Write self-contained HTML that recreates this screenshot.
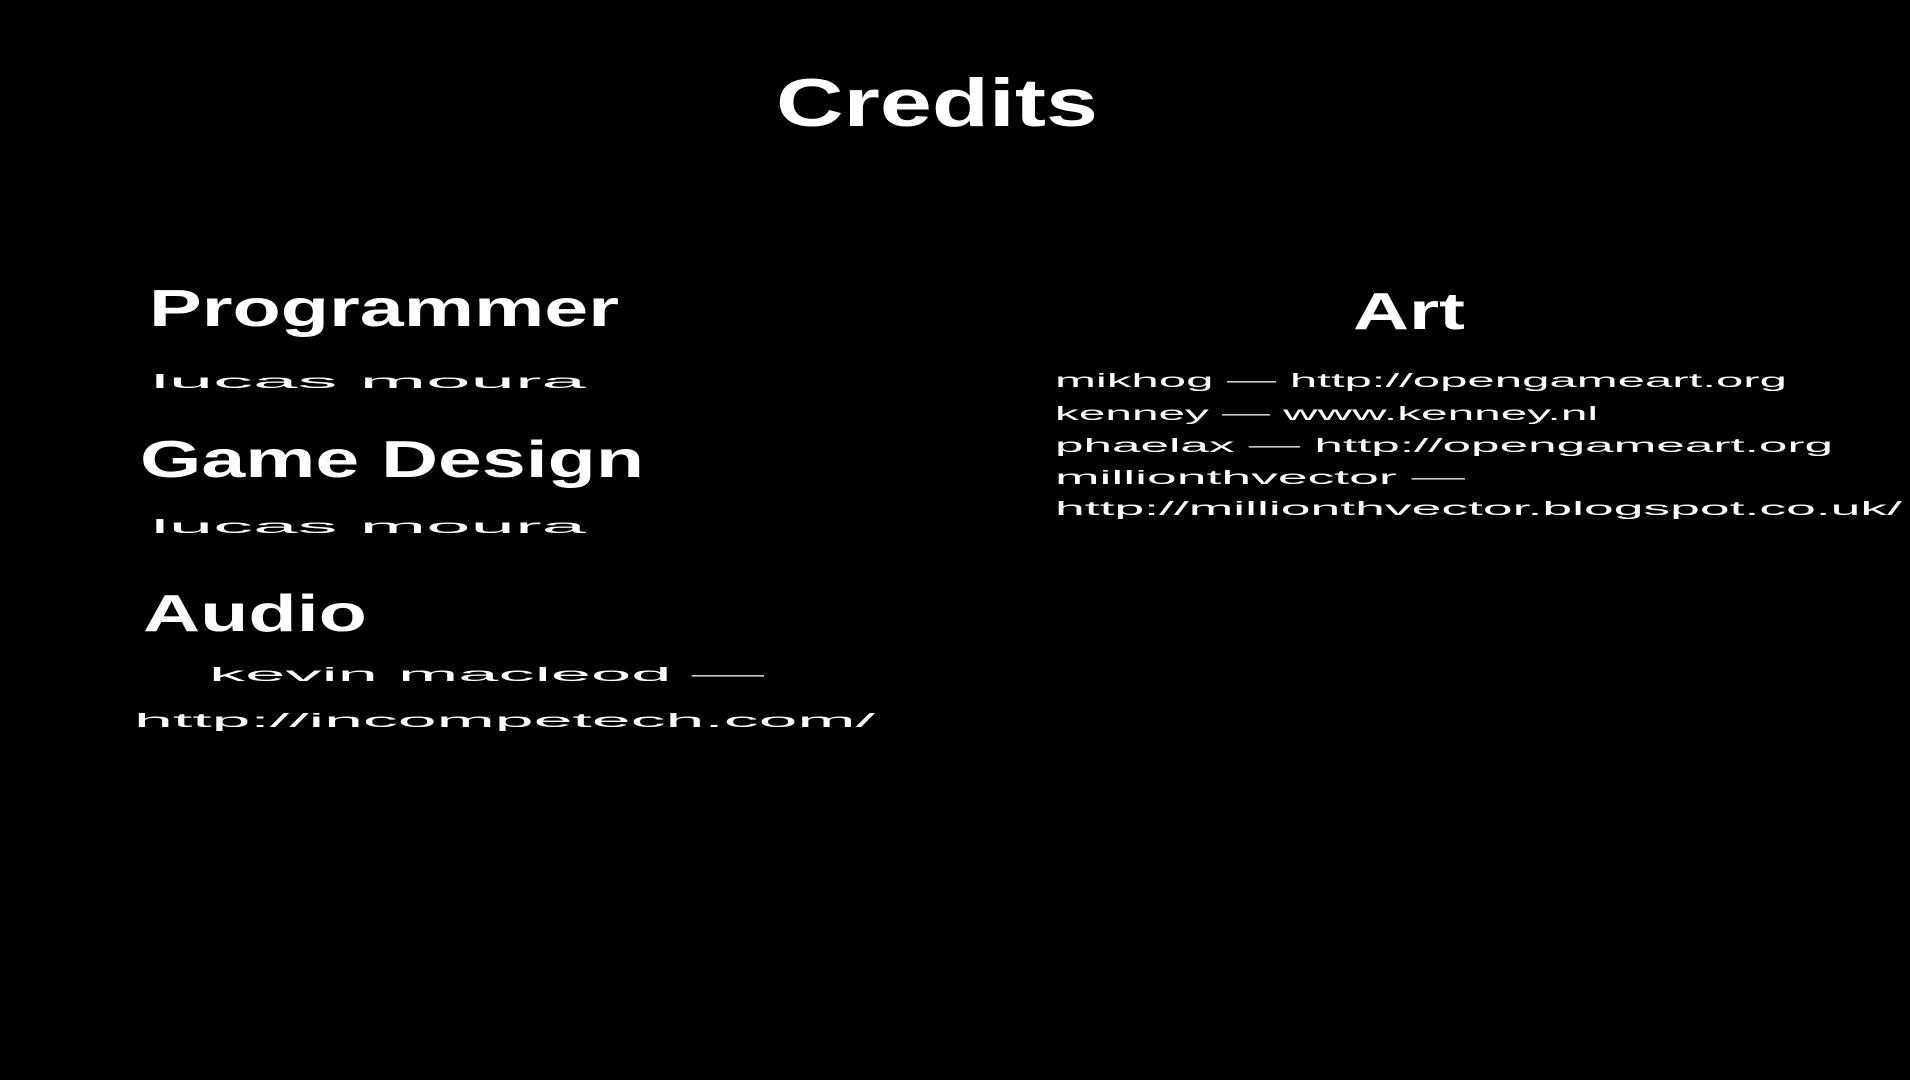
<!DOCTYPE html>
<html><head><meta charset="utf-8"><style>
html,body{margin:0;padding:0;background:#000;width:1910px;height:1080px;overflow:hidden}
svg{display:block}
.h{font-family:"Liberation Sans",sans-serif;font-weight:bold;fill:#fff}
.s{font-family:"Liberation Sans",sans-serif;fill:#fff;font-size:19px}
</style></head><body>
<svg width="1910" height="1080" viewBox="0 0 1910 1080">
<text class="h" x="776" y="126" font-size="68" textLength="322" lengthAdjust="spacingAndGlyphs">Credits</text>
<text class="h" x="149" y="326" font-size="52" textLength="470" lengthAdjust="spacingAndGlyphs">Programmer</text>
<text class="s" x="151" y="388" textLength="435" lengthAdjust="spacingAndGlyphs">lucas  moura</text>
<text class="h" x="140" y="477" font-size="52" textLength="504" lengthAdjust="spacingAndGlyphs">Game Design</text>
<text class="s" x="151" y="533" textLength="435" lengthAdjust="spacingAndGlyphs">lucas  moura</text>
<text class="h" x="143" y="631" font-size="52" textLength="224" lengthAdjust="spacingAndGlyphs">Audio</text>
<text class="s" x="209" y="681" textLength="555" lengthAdjust="spacingAndGlyphs">kevin  macleod  —</text>
<text class="s" x="134" y="727" textLength="741" lengthAdjust="spacingAndGlyphs">http://incompetech.com/</text>
<text class="h" x="1353" y="329" font-size="52" textLength="112" lengthAdjust="spacingAndGlyphs">Art</text>
<text class="s" x="1055" y="387" textLength="732" lengthAdjust="spacingAndGlyphs">mikhog  —  http://opengameart.org</text>
<text class="s" x="1055" y="420" textLength="543" lengthAdjust="spacingAndGlyphs">kenney  —  www.kenney.nl</text>
<text class="s" x="1055" y="452" textLength="778" lengthAdjust="spacingAndGlyphs">phaelax  —  http://opengameart.org</text>
<text class="s" x="1055" y="484" textLength="410" lengthAdjust="spacingAndGlyphs">millionthvector  —</text>
<text class="s" x="1055" y="515" textLength="847" lengthAdjust="spacingAndGlyphs">http://millionthvector.blogspot.co.uk/</text>
</svg>
</body></html>
